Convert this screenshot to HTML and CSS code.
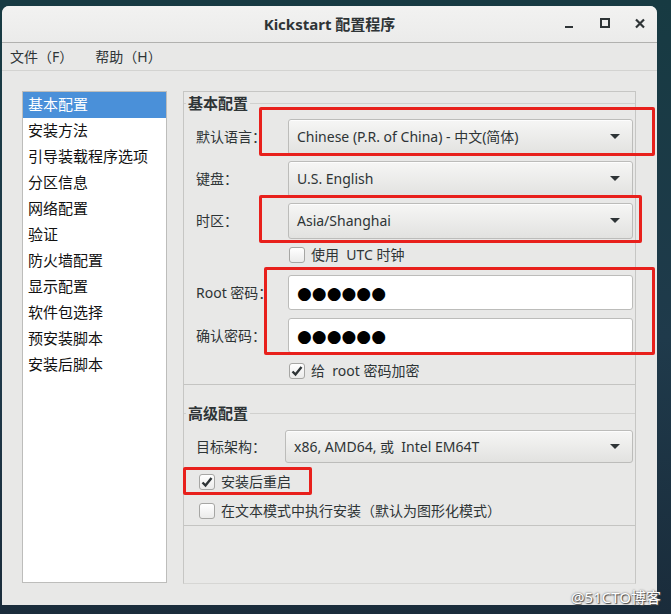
FILE: index.html
```html
<!DOCTYPE html>
<html lang="zh-CN">
<head>
    <meta charset="UTF-8">
    <title>Kickstart 配置程序</title>
    <link rel="stylesheet" href="styles.css">
</head>
<body>
    <div class="window">
        <div class="titlebar">
            <span class="title">Kickstart 配置程序</span>
            <div class="win-buttons">
                <svg width="12" height="12" viewBox="0 0 12 12"><rect x="1" y="8" width="8" height="2" fill="#2e3436"/></svg>
                <svg width="12" height="12" viewBox="0 0 12 12"><rect x="2" y="1" width="8" height="8" fill="none" stroke="#2e3436" stroke-width="2"/></svg>
                <svg width="12" height="12" viewBox="0 0 12 12"><path d="M2 1.5 L10 9.5 M10 1.5 L2 9.5" stroke="#2e3436" stroke-width="2.2"/></svg>
            </div>
        </div>

        <div class="menubar">
            <span class="menu-item">文件（F）</span>
            <span class="menu-item">帮助（H）</span>
        </div>

        <div class="content">
            <ul class="sidebar">
                <li class="selected">基本配置</li>
                <li>安装方法</li>
                <li>引导装载程序选项</li>
                <li>分区信息</li>
                <li>网络配置</li>
                <li>验证</li>
                <li>防火墙配置</li>
                <li>显示配置</li>
                <li>软件包选择</li>
                <li>预安装脚本</li>
                <li>安装后脚本</li>
            </ul>

            <div class="panel">
                <fieldset class="section basic">
                    <legend>基本配置</legend>
                    <div class="row combo-row">
                        <span class="label">默认语言：</span>
                        <div class="combo">Chinese (P.R. of China) - 中文(简体)<span class="arrow"></span></div>
                    </div>
                    <div class="row combo-row">
                        <span class="label">键盘：</span>
                        <div class="combo">U.S. English<span class="arrow"></span></div>
                    </div>
                    <div class="row combo-row">
                        <span class="label">时区：</span>
                        <div class="combo">Asia/Shanghai<span class="arrow"></span></div>
                    </div>
                    <div class="row check-row indent utc">
                        <span class="check"></span>
                        <span>使用&nbsp; UTC 时钟</span>
                    </div>
                    <div class="row entry-row">
                        <span class="label">Root 密码：</span>
                        <div class="entry">●●●●●●</div>
                    </div>
                    <div class="row entry-row second">
                        <span class="label">确认密码：</span>
                        <div class="entry">●●●●●●</div>
                    </div>
                    <div class="row check-row indent crypt">
                        <span class="check checked"><svg width="12" height="12" viewBox="0 0 12 12"><path d="M1.5 6.5 L4.5 9.5 L10.5 2" fill="none" stroke="#2e3436" stroke-width="2.4"/></svg></span>
                        <span>给&nbsp; root 密码加密</span>
                    </div>
                </fieldset>

                <fieldset class="section advanced">
                    <legend>高级配置</legend>
                    <div class="row arch-row">
                        <span class="label">目标架构：</span>
                        <div class="combo">x86, AMD64, 或&nbsp; Intel EM64T<span class="arrow"></span></div>
                    </div>
                    <div class="row check-row">
                        <span class="check checked"><svg width="12" height="12" viewBox="0 0 12 12"><path d="M1.5 6.5 L4.5 9.5 L10.5 2" fill="none" stroke="#2e3436" stroke-width="2.4"/></svg></span>
                        <span>安装后重启</span>
                    </div>
                    <div class="row check-row">
                        <span class="check"></span>
                        <span>在文本模式中执行安装（默认为图形化模式）</span>
                    </div>
                </fieldset>
            </div>
        </div>
    </div>

    <!-- 截图上的红色标注框 -->
    <div class="mark mark-lang"></div>
    <div class="mark mark-tz"></div>
    <div class="mark mark-pw"></div>
    <div class="mark mark-reboot"></div>

    <div class="watermark">@51CTO博客</div>
</body>
</html>
```

FILE: styles.css
```css
* {
    margin: 0;
    padding: 0;
    box-sizing: border-box;
}

body {
    width: 671px;
    height: 614px;
    overflow: hidden;
    position: relative;
    background: linear-gradient(180deg, #173a42 0%, #1f3a4b 55%, #1a2c3b 100%);
    font-family: "Noto Sans", "Noto Sans CJK SC", sans-serif;
    font-size: 14px;
    line-height: 20px;
    color: #2e3436;
}

.window {
    margin: 6px 0 0 2px;
    width: 655px;
    height: 599px;
    background: #e8e8e7;
    border-radius: 7px 7px 0 0;
    overflow: hidden;
}

/* 标题栏 */
.titlebar {
    height: 37px;
    background: linear-gradient(#f2f2f1, #ebebea);
    border-bottom: 1px solid #b1b1af;
    display: flex;
    align-items: center;
    justify-content: center;
    position: relative;
}

.title {
    font-size: 15px;
    font-weight: bold;
    color: #2e3436;
}

.win-buttons {
    position: absolute;
    right: 11px;
    top: 12px;
    display: flex;
    gap: 23px;
}

/* 菜单栏 */
.menubar {
    height: 28px;
    border-bottom: 1px solid #d3d3d1;
    display: flex;
    align-items: center;
    padding-left: 8px;
    gap: 22px;
}

.menu-item {
    font-size: 14px;
    color: #2e3436;
}

/* 主体 */
.content {
    display: flex;
    padding: 20px 0 0 20px;
    gap: 16px;
}

.sidebar {
    list-style: none;
    width: 145px;
    height: 492px;
    background: #fff;
    border: 1px solid #bdbdbb;
}

.sidebar li {
    height: 26px;
    line-height: 25px;
    padding-left: 5px;
    font-size: 15px;
    color: #111;
}

.sidebar li.selected {
    background: #4a90d9;
    color: #fff;
}

.panel {
    width: 453px;
    height: 493px;
    border: 1px solid #c6c6c4;
    border-bottom-color: #d6d6d4;
}

.section {
    border: none;
    border-top: 1px solid #d0d0ce;
    border-bottom: 1px solid #c4c4c2;
    padding: 0 2px 0 12px;
}

.section legend {
    font-size: 15px;
    font-weight: bold;
    line-height: 20px;
    padding: 0 2px;
    margin-left: -10px;
    color: #2e3436;
}

.basic {
    margin-top: 1px;
}

.advanced {
    margin-top: 18px;
}

.row {
    display: flex;
    align-items: center;
}

.label {
    width: 92px;
    flex: none;
    font-size: 14px;
}

.combo-row {
    height: 36px;
    margin-bottom: 6px;
}

.combo-row:first-of-type {
    margin-top: 6px;
}

.combo {
    flex: 1;
    height: 100%;
    display: flex;
    align-items: center;
    padding-left: 8px;
    position: relative;
    border: 1px solid #bcbcba;
    border-radius: 3px;
    background: linear-gradient(#f6f6f5, #e2e2e0);
    box-shadow: 0 1px 0 rgba(255, 255, 255, 0.8) inset;
}

.arrow {
    position: absolute;
    right: 12px;
    top: 50%;
    margin-top: -3px;
    border-left: 5px solid transparent;
    border-right: 5px solid transparent;
    border-top: 5px solid #2e3436;
}

.check-row {
    height: 20px;
    gap: 6px;
}

.indent {
    padding-left: 93px;
}

.basic .utc {
    margin: 0 0 10px;
}

.basic .crypt {
    margin: 8px 0 3px;
}

.check {
    width: 16px;
    height: 16px;
    flex: none;
    border: 1px solid #a6a6a4;
    border-radius: 3px;
    background: linear-gradient(#ffffff, #ebebea);
    display: flex;
    align-items: center;
    justify-content: center;
}

.entry-row {
    height: 35px;
}

.entry-row.second {
    margin-top: 8px;
}

.entry {
    flex: 1;
    height: 100%;
    display: flex;
    align-items: center;
    padding-left: 8px;
    background: #fff;
    border: 1px solid #bcbcba;
    border-radius: 3px;
    font-family: "DejaVu Sans", sans-serif;
    font-size: 17px;
    color: #000;
}

.advanced .arch-row {
    height: 33px;
    margin: 7px 0 0;
}

.advanced .arch-row .label {
    width: 89px;
}

.advanced .check-row {
    padding-left: 3px;
    margin-top: 9px;
}

.advanced .check-row:last-child {
    margin-bottom: 4px;
}

/* 红色标注框 */
.mark {
    position: absolute;
    border: 3px solid #e8201c;
    border-radius: 2px;
}

.mark-lang {
    left: 259px;
    top: 107px;
    width: 396px;
    height: 49px;
}

.mark-tz {
    left: 259px;
    top: 195px;
    width: 383px;
    height: 48px;
}

.mark-pw {
    left: 264px;
    top: 267px;
    width: 391px;
    height: 88px;
}

.mark-reboot {
    left: 183px;
    top: 467px;
    width: 129px;
    height: 28px;
}

.watermark {
    position: absolute;
    right: 10px;
    bottom: 7px;
    font-size: 15px;
    color: #fff;
    text-shadow: 0 0 2px #555, 1px 1px 1px #444;
}
```
